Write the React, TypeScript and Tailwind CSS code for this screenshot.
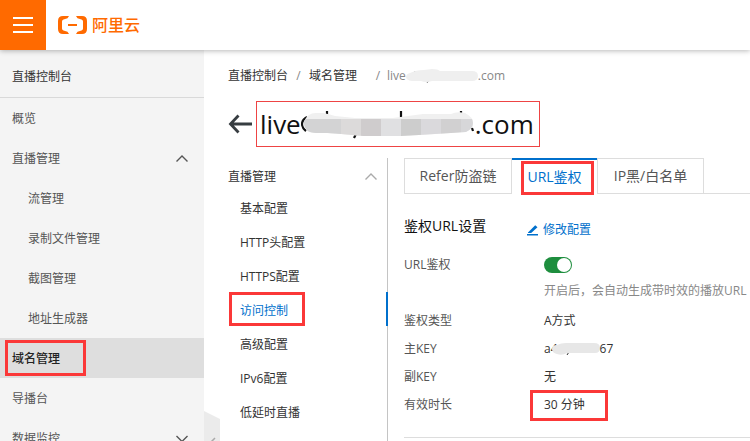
import type { ReactNode } from "react";

type Item = { label: string; active?: boolean };

const streamItems: Item[] = [
  { label: "流管理" },
  { label: "录制文件管理" },
  { label: "截图管理" },
  { label: "地址生成器" },
];

const configItems: Item[] = [
  { label: "基本配置" },
  { label: "HTTP头配置" },
  { label: "HTTPS配置" },
  { label: "访问控制", active: true },
  { label: "高级配置" },
  { label: "IPv6配置" },
  { label: "低延时直播" },
];

function Chevron({ up = false, className = "" }: { up?: boolean; className?: string }) {
  return (
    <svg className={className} width="12" height="8" viewBox="0 0 12 8" fill="none" stroke="currentColor" strokeWidth="1.4" aria-hidden="true">
      <path d={up ? "M0.5 6.5 6 1 11.5 6.5" : "M0.5 1 6 6.5 11.5 1"} />
    </svg>
  );
}

/* Red frame drawn over the thing it surrounds. */
function Mark({ className }: { className: string }) {
  return <span aria-hidden="true" className={`pointer-events-none absolute z-10 border-[3px] border-[#fb3838] ${className}`} />;
}

function Header() {
  return (
    <header className="relative z-20 flex h-[50px] items-center bg-white shadow-[0_1px_5px_rgba(0,0,0,0.28)]">
      <button type="button" aria-label="菜单" className="flex h-full w-[46px] items-center justify-center bg-[#ff6a00]">
        <svg width="20" height="16" viewBox="0 0 20 16" fill="#fff" aria-hidden="true">
          <path d="M0 0h20v2H0zM0 7h20v2H0zM0 14h20v2H0z" />
        </svg>
      </button>
      <a href="#home" className="ml-3 flex items-center gap-1 text-base font-medium text-[#ff6a00]">
        <svg width="30" height="18" viewBox="0 0 30 18" fill="#ff6a00" aria-hidden="true">
          <path d="M11 0H5Q0 0 0 5v8q0 5 5 5h6l-1.500-2.200-4-1.200Q4 14.100 4 12.500v-7Q4 3.900 5.500 3.400l4-1.200z" />
          <path d="M18 0h6q5 0 5 5v8q0 5-5 5h-6l1.500-2.200 4-1.200q1.500-.500 1.500-2.100v-7q0-1.600-1.500-2.100l-4-1.200z" />
          <path d="M10 8h9v2H10z" />
        </svg>
        <span>阿里云</span>
      </a>
    </header>
  );
}

function SideLink({ children, className = "" }: { children: ReactNode; className?: string }) {
  return (
    <a href="#nav" className={`flex h-10 items-center pt-[2px] pr-4 pl-3 ${className}`}>
      {children}
    </a>
  );
}

function Sidebar() {
  return (
    <nav aria-label="直播控制台" className="w-[204px] shrink-0 bg-[#f4f4f4] text-[#555]">
      <h2 className="flex h-12 items-center border-b border-[#d9d9d9] pt-[6px] pl-3 text-[#333]">直播控制台</h2>
      <SideLink>概览</SideLink>
      <button type="button" aria-expanded="true" className="flex h-10 w-full items-center justify-between pt-[2px] pr-4 pl-3">
        直播管理
        <Chevron up />
      </button>
      <ul>
        {streamItems.map((item) => (
          <li key={item.label}>
            <SideLink className="pl-7">{item.label}</SideLink>
          </li>
        ))}
      </ul>
      <div className="relative">
        <SideLink className="bg-[#dedede] font-medium text-[#222]">域名管理</SideLink>
        <Mark className="inset-y-[2px] left-[5px] w-[81px]" />
      </div>
      <SideLink>导播台</SideLink>
      <button type="button" aria-expanded="false" className="flex h-10 w-full items-center justify-between pt-[2px] pr-4 pl-3">
        数据监控
        <Chevron />
      </button>
    </nav>
  );
}

function Breadcrumb() {
  return (
    <nav aria-label="位置" className="flex items-center pt-4 leading-5 text-[#333]">
      <a href="#console">直播控制台</a>
      <span className="w-[21px] text-center text-[#888]">/</span>
      <a href="#domains">域名管理</a>
      <span className="ml-3 w-[18px] text-center text-[#888]">/</span>
      <span className="flex items-center text-[#888]">
        live
        <svg width="72" height="14" viewBox="0 0 72 14" aria-hidden="true">
          <path d="M9 2v3M23 11l-2 3" stroke="#888" />
          <path d="M4 4Q10 1 18 1L26 0Q32 0 34 2H66Q72 2 72 7T66 12H26Q20 14 15 12H6Q0 11 0 8T4 4Z" fill="#efefef" />
        </svg>
        .com
      </span>
    </nav>
  );
}

function TitleBar() {
  return (
    <div className="mt-[15px] flex items-center">
      <a href="#back" aria-label="返回" className="w-7 shrink-0">
        <svg width="24" height="20" viewBox="0 0 24 20" fill="none" stroke="#373d41" strokeWidth="2.8" aria-hidden="true">
          <path d="M10.500 1.500 2.500 10l8 8.500M2.500 10H24" />
        </svg>
      </a>
      <h1 className="flex h-[46px] w-[284px] items-center border border-[#ee4444] pl-[3px] text-[26px] text-[#111]">
        live
        <svg className="shrink-0" width="174" height="30" viewBox="0 0 174 30" aria-hidden="true">
          <clipPath id="smudge">
            <path d="M3 13Q6 4 15 4H22Q28 5 34 7L54 9H92L122 5H150Q156 2 164 4 172 8 172 14T165 23L150 24 118 26 100 27H62L40 25 26 24H15Q3 24 3 13Z" />
          </clipPath>
          <path d="M6 8Q1 11 1 15T5 22M26 2v8M100 2v10M160 2v4M55 25l-2 4M171 19l1 3" stroke="#111" strokeWidth="2.200" fill="none" />
          <g clipPath="url(#smudge)">
            <path d="M0 0h174v30H0z" fill="#f0f0f0" />
            <path d="M0 10h40v20H0z" fill="#d3d3d4" />
            <path d="M40 10h20v20H40z" fill="#dcdada" />
            <path d="M60 10h20v20H60z" fill="#cfcccd" />
            <path d="M80 10h20v20H80z" fill="#e0e0e2" />
            <path d="M100 10h20v20h-20z" fill="#cdcdcd" />
            <path d="M120 10h20v20h-20z" fill="#dad9dc" />
            <path d="M140 10h20v20h-20z" fill="#d1d0d1" />
            <path d="M160 10h14v20h-14z" fill="#d7d7d9" />
          </g>
        </svg>
        .com
      </h1>
    </div>
  );
}

function ConfigNav() {
  return (
    <nav aria-label="直播管理" className="w-40 shrink-0 border-r border-[#c4c4c4] text-[#333]">
      <button type="button" aria-expanded="true" className="flex h-8 w-full items-center justify-between pt-[6px] pr-[10px]">
        直播管理
        <Chevron up className="text-[#aaa]" />
      </button>
      <ul>
        {configItems.map((item) => (
          <li key={item.label} className="relative">
            <a
              href="#config"
              aria-current={item.active ? "page" : undefined}
              className={`-mr-px flex h-[34px] items-center border-r-2 pt-1 pl-3 ${item.active ? "border-[#0070cc] text-[#0070cc]" : "border-transparent"}`}
            >
              {item.label}
            </a>
            {item.active && <Mark className="inset-y-0 left-px w-[76px]" />}
          </li>
        ))}
      </ul>
    </nav>
  );
}

function Tabs() {
  return (
    <div role="tablist" className="flex h-9 text-sm text-[#555]">
      <button type="button" role="tab" aria-selected="false" className="w-[108px] border border-[#ddd]">
        Refer防盗链
      </button>
      <button type="button" role="tab" aria-selected="true" className="relative w-[85px] border-t-2 border-[#0070cc] text-[#0070cc]">
        URL鉴权
        <Mark className="-bottom-px left-[9px] right-[3px] top-px" />
      </button>
      <button type="button" role="tab" aria-selected="false" className="w-[107px] border border-[#ddd]">
        IP黑/白名单
      </button>
      <div className="flex-1 border-b border-[#ddd]" />
    </div>
  );
}

function Row({ label, children }: { label: string; children: ReactNode }) {
  return (
    <div className="flex h-7 items-center">
      <dt className="w-[140px] shrink-0 text-[#555]">{label}</dt>
      <dd className="relative flex items-center text-[#333]">{children}</dd>
    </div>
  );
}

function AuthSettings() {
  return (
    <section className="border-b border-[#ddd] pb-[18px]">
      <div className="flex items-center pt-5">
        <h2 className="w-[123px] text-sm leading-6 text-[#111]">鉴权URL设置</h2>
        <a href="#edit" className="flex items-center gap-1 pt-2 text-[#0070cc]">
          <svg width="12" height="12" viewBox="0 0 12 12" fill="#0070cc" aria-hidden="true">
            <path d="M1 8.500 8.200 1.200 10.500 3.300 4.200 9H1zM0 10h11v1.500H0z" />
          </svg>
          修改配置
        </a>
      </div>
      <div className="mt-[15px] flex items-start">
        <label htmlFor="url-auth" className="w-[140px] shrink-0 leading-6 text-[#555]">
          URL鉴权
        </label>
        <div>
          <div className="flex h-6 items-center">
            <input
              id="url-auth"
              type="checkbox"
              role="switch"
              defaultChecked
              className="h-4 w-7 appearance-none rounded-full bg-[#ccc] p-px before:block before:size-[14px] before:rounded-full before:bg-white checked:bg-[#1e8e3e] checked:before:ml-3"
            />
          </div>
          <p className="mt-1 leading-5 whitespace-nowrap text-[#888]">开启后，会自动生成带时效的播放URL</p>
        </div>
      </div>
      <dl className="mt-[6px]">
        <Row label="鉴权类型">A方式</Row>
        <Row label="主KEY">
          a4
          <svg className="-ml-[6px]" width="48" height="14" viewBox="0 0 48 14" aria-hidden="true">
            <path d="M17 10l-2 3" stroke="#333" />
            <path d="M5 3Q9 1 14 1H42Q48 1 48 6T43 11H15Q10 14 5 12Q0 11 0 7T5 3Z" fill="#e7e7e7" />
          </svg>
          67
        </Row>
        <Row label="副KEY">无</Row>
        <Row label="有效时长">
          30 分钟
          <Mark className="-top-[7px] -left-[14px] h-[31px] w-[78px]" />
        </Row>
      </dl>
    </section>
  );
}

export default function App() {
  return (
    <div className="flex h-screen flex-col overflow-hidden bg-white font-['Open_Sans','Noto_Sans_CJK_SC',sans-serif] text-xs">
      <Header />
      <div className="flex min-h-0 flex-1">
        <Sidebar />
        <main className="relative flex min-w-0 flex-1 flex-col pl-6">
          <button type="button" aria-label="收起" className="absolute top-[361px] left-0">
            <svg width="16" height="60" viewBox="0 0 16 60" fill="none" aria-hidden="true">
              <path d="M0 0 16 8V52L0 60Z" fill="#ebebeb" />
              <path d="M11 27 6.500 31.500 11 36" stroke="#aaa" strokeWidth="1.500" />
            </svg>
          </button>
          <Breadcrumb />
          <TitleBar />
          <div className="mt-[11px] flex flex-1">
            <ConfigNav />
            <div className="ml-4 min-w-0 flex-1">
              <Tabs />
              <AuthSettings />
            </div>
          </div>
        </main>
      </div>
    </div>
  );
}
